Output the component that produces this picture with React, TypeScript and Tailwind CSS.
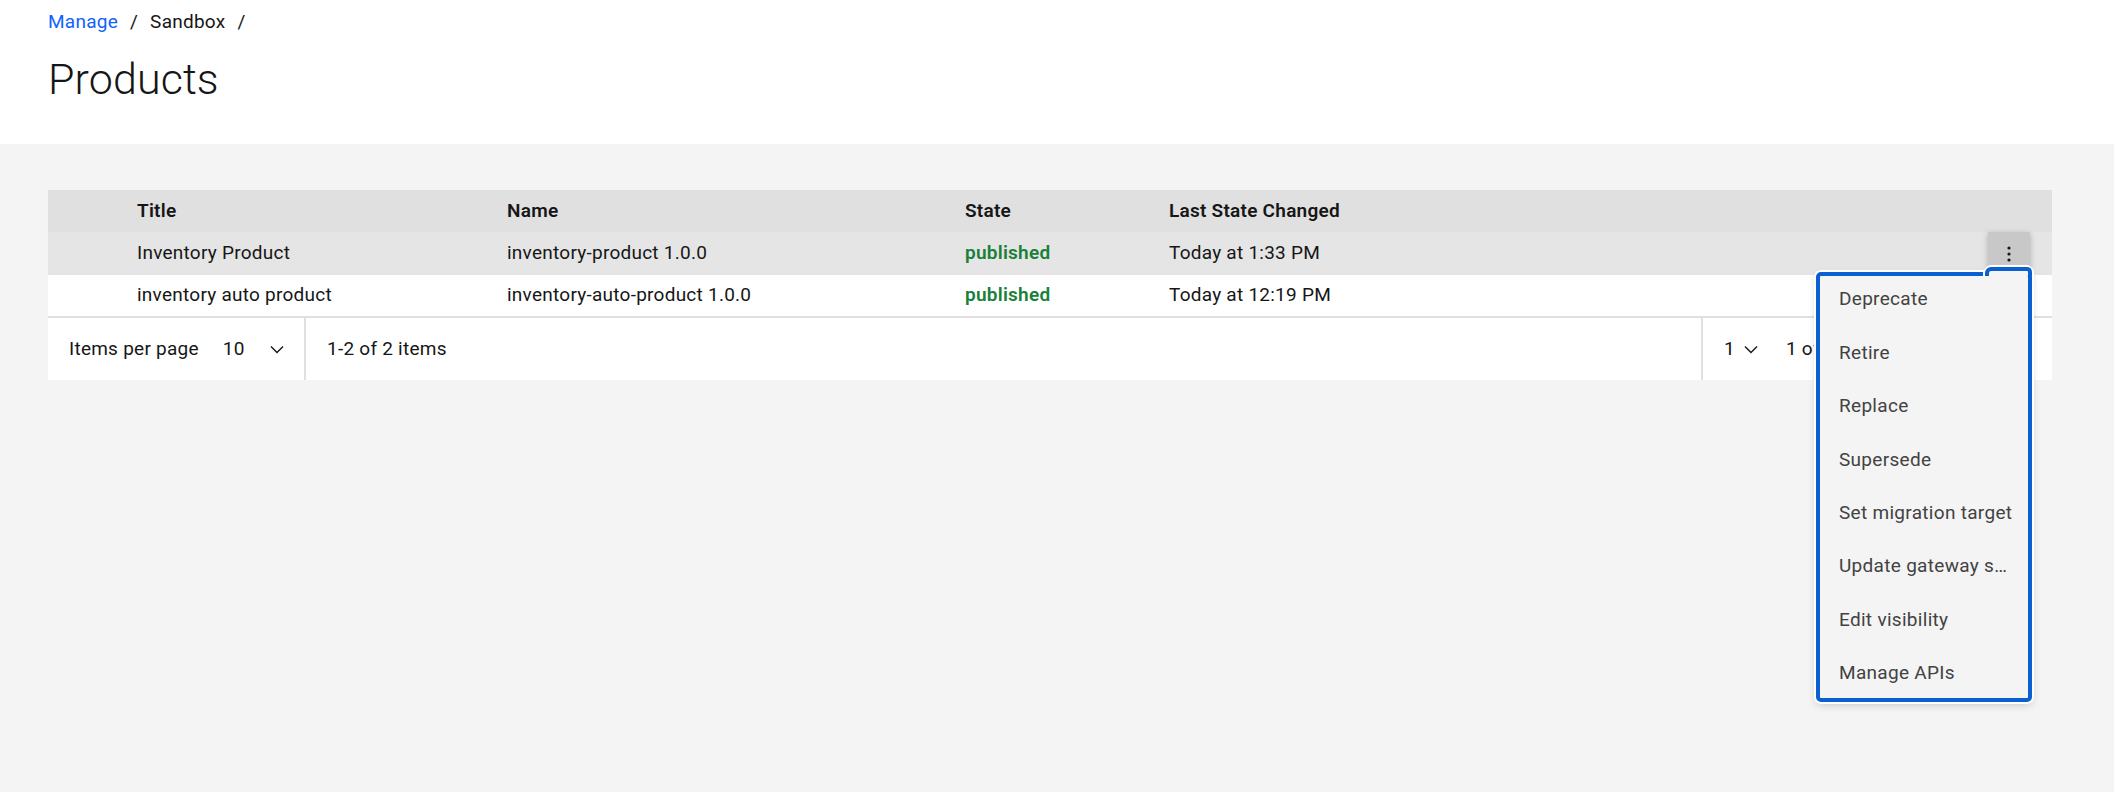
import { ChevronLeft, ChevronRight } from "lucide-react";

const cols = "grid grid-cols-[89px_370px_458px_204px_1fr_86px]";

const ROWS = [
  { title: "Inventory Product", name: "inventory-product 1.0.0", state: "published", changed: "Today at 1:33 PM", active: true },
  { title: "inventory auto product", name: "inventory-auto-product 1.0.0", state: "published", changed: "Today at 12:19 PM", active: false },
];

const MENU = [
  "Deprecate",
  "Retire",
  "Replace",
  "Supersede",
  "Set migration target",
  "Update gateway services",
  "Edit visibility",
  "Manage APIs",
];

function Chevron() {
  return (
    <svg width="14" height="9" viewBox="0 0 14 9" fill="none" stroke="#161616" strokeWidth="1.4">
      <polyline points="1,1.5 7,7.5 13,1.5" />
    </svg>
  );
}

function OverflowMenu() {
  return (
    <div className="absolute right-[20px] top-[82px] w-[216px] h-[430px] rounded-[5px] bg-[#f4f4f4] shadow-[0_0_0_2px_#fff,0_3px_8px_rgba(0,0,0,0.18)] z-10">
      <ul className="pt-[1px]">
        {MENU.map((item) => (
          <li
            key={item}
            className="h-[53.4px] flex items-center pl-[23px] pr-[16px] text-[19px] tracking-[0.3px] text-[#424242] whitespace-nowrap overflow-hidden"
          >
            <span className="truncate">{item}</span>
          </li>
        ))}
      </ul>
      {/* focus ring */}
      <div className="absolute inset-0 rounded-[5px] border-4 border-[#0b5fd0] pointer-events-none" />
      {/* tab joining the trigger */}
      <div className="absolute left-[169px] right-0 top-[-5px] h-[9px] bg-[#f4f4f4] border-t-4 border-l-4 border-r-4 border-[#0b5fd0] rounded-tl-[6px] rounded-tr-[5px] shadow-[0_-2px_0_#fff,2px_0_0_#fff,-2px_0_0_#fff]" />
    </div>
  );
}

export default function App() {
  return (
    <div className="min-h-[792px] bg-[#f4f4f4] font-['Roboto',sans-serif] text-[#161616] tracking-[0.25px]">
      {/* Page header */}
      <header className="h-[144px] bg-white px-[48px] pt-[10px]">
        <nav className="flex items-center text-[19px] leading-[24px]">
          <span className="text-[#0f62fe]">Manage</span>
          <span className="mx-[12px]">/</span>
          <span>Sandbox</span>
          <span className="ml-[12px]">/</span>
        </nav>
        <h1 className="mt-[19px] text-[43px] leading-[52px] font-light tracking-[0.1px]">Products</h1>
      </header>

      {/* Table */}
      <main className="pt-[46px] pl-[48px] pr-[62px]">
        <div className="relative">
          <div className={`${cols} h-[42px] items-center bg-[#e0e0e0] text-[19px] font-semibold`}>
            <div />
            <div>Title</div>
            <div>Name</div>
            <div>State</div>
            <div>Last State Changed</div>
            <div />
          </div>

          {ROWS.map((r, i) => (
            <div
              key={r.name}
              className={`${cols} ${i === 0 ? "h-[43px]" : "h-[41px]"} items-center text-[19px] ${r.active ? "bg-[#e5e5e5]" : "bg-white"}`}
            >
              <div />
              <div>{r.title}</div>
              <div>{r.name}</div>
              <div className="font-semibold text-[#198038]">{r.state}</div>
              <div>{r.changed}</div>
              <div className="flex justify-end pr-[22px]">
                {r.active && (
                  <button className="w-[42px] h-[43px] flex items-center justify-center bg-[#c8c8c8] shadow-[0_2px_6px_rgba(0,0,0,0.25)]">
                    <svg width="4" height="16" viewBox="0 0 4 16" fill="#161616">
                      <circle cx="2" cy="2" r="1.6" />
                      <circle cx="2" cy="8" r="1.6" />
                      <circle cx="2" cy="14" r="1.6" />
                    </svg>
                  </button>
                )}
              </div>
            </div>
          ))}

          {/* Pagination */}
          <div className="flex h-[64px] bg-white border-t-2 border-[#e0e0e0] text-[19px]">
            <div className="w-[258px] flex items-center pl-[21px] border-r-2 border-[#e0e0e0]">
              <span>Items per page</span>
              <span className="ml-[24px]">10</span>
              <span className="ml-[25px] flex"><Chevron /></span>
            </div>
            <div className="flex items-center pl-[21px]">1-2 of 2 items</div>
            <div className="flex-1" />
            <div className="w-[351px] flex border-l-2 border-[#e0e0e0]">
              <div className="flex-1 flex items-center pl-[21px] overflow-hidden whitespace-nowrap">
                <span>1</span>
                <span className="ml-[9px] flex"><Chevron /></span>
                <span className="ml-[28px]">1 of 1 pages</span>
              </div>
              <button className="w-[65px] flex items-center justify-center border-l-2 border-[#e0e0e0] text-[#c6c6c6]">
                <ChevronLeft size={22} strokeWidth={1.5} />
              </button>
              <button className="w-[65px] flex items-center justify-center border-l-2 border-[#e0e0e0] text-[#c6c6c6]">
                <ChevronRight size={22} strokeWidth={1.5} />
              </button>
            </div>
          </div>

          <OverflowMenu />
        </div>
      </main>
    </div>
  );
}
